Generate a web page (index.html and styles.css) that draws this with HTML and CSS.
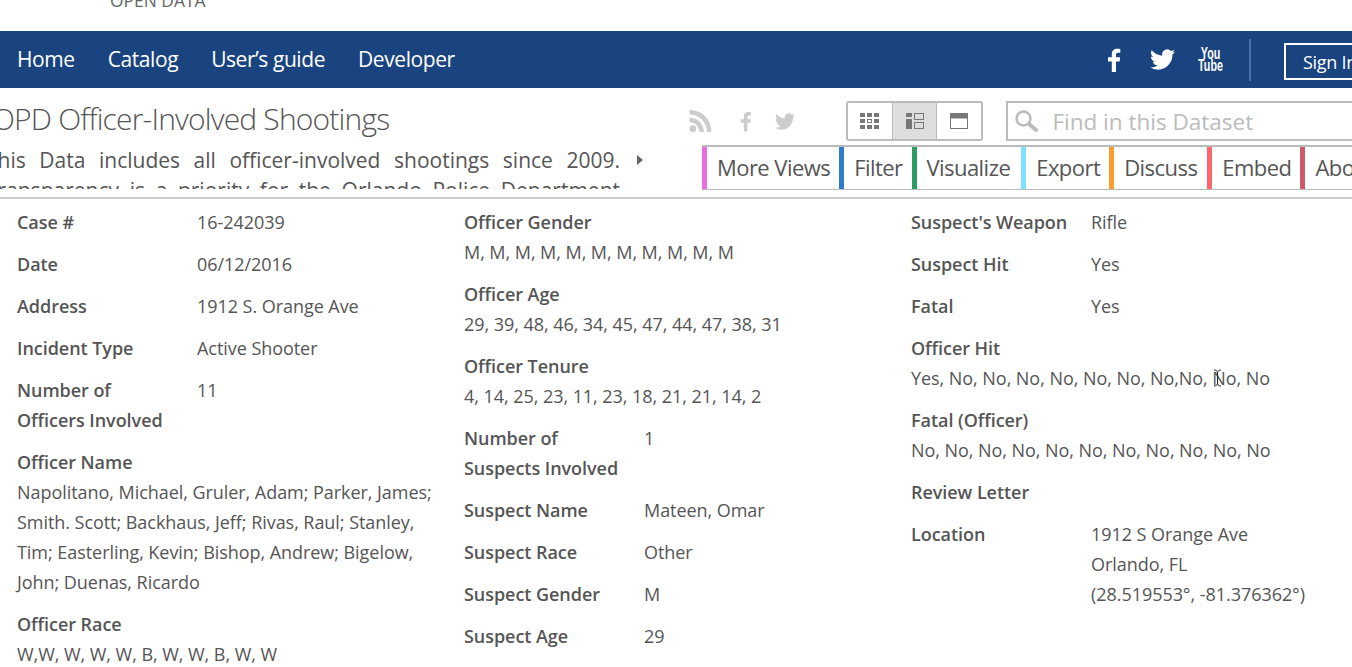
FILE: index.html
```html
<!doctype html>
<html>
<head>
<meta charset="utf-8">
<title>OPD Officer-Involved Shootings</title>
<link rel="stylesheet" href="styles.css">
</head>

<body>
<div class="logo"><span>OPEN DATA</span></div>

<div class="nav">
    <a>Home</a>
    <a>Catalog</a>
    <a>User’s guide</a>
    <a>Developer</a>
    <div class="nav_right">
        <svg class="nav_fb" viewBox="0 0 16 24" width="16" height="24"><path d="M10 24V13.5h3.6l.6-4.2H10V6.700c0-1.200.4-2 2.100-2h2.200V.9C13.900.8 12.600.700 11.200.700 8 .7 5.800 2.600 5.800 6.200v3.100H2v4.200h3.800V24z" fill="#fff"/></svg>
        <svg class="nav_tw" viewBox="0 0 24 24" width="25" height="25"><path d="M23.953 4.570a10 10 0 0 1-2.825.775 4.958 4.958 0 0 0 2.163-2.723c-.951.555-2.005.959-3.127 1.184a4.920 4.920 0 0 0-8.384 4.482C7.690 8.095 4.067 6.130 1.640 3.162a4.822 4.822 0 0 0-.666 2.475c0 1.710.870 3.213 2.188 4.096a4.904 4.904 0 0 1-2.228-.616v.060a4.923 4.923 0 0 0 3.946 4.827 4.996 4.996 0 0 1-2.212.085 4.936 4.936 0 0 0 4.604 3.417 9.867 9.867 0 0 1-6.102 2.105c-.390 0-.779-.023-1.170-.067a13.995 13.995 0 0 0 7.557 2.209c9.053 0 13.998-7.496 13.998-13.985 0-.210 0-.420-.015-.630A9.935 9.935 0 0 0 24 4.590z" fill="#fff"/></svg>
        <div class="nav_yt"><span>You</span><span>Tube</span></div>
        <div class="nav_sep"></div>
        <div class="signin">Sign In</div>
    </div>
</div>

<div class="head">
    <div class="head_left">
        <h1>OPD Officer-Involved Shootings</h1>
        <div class="desc_row">
            <p class="desc">This Data includes all officer-involved shootings since 2009. Transparency is a priority for the Orlando Police Department and this data is shared with the public.</p>
            <div class="desc_arrow"></div>
        </div>
    </div>
    <div class="head_right">
        <div class="tools">
            <svg class="tool_rss" viewBox="0 0 24 24" width="24" height="24"><circle cx="4" cy="20" r="3.500" fill="#ccc"/><path d="M.5 8.500v4.700c6 0 10.300 4.300 10.300 10.300h4.700C15.500 14.800 9 8.500.5 8.500z" fill="#ccc"/><path d="M.5.500v4.700C10.800 5.200 18.800 13.200 18.800 23.500h4.700C23.500 10.500 13.500.5.500.5z" fill="#ccc"/></svg>
            <svg class="tool_fb" viewBox="0 0 16 24" width="14" height="21"><path d="M10 24V13.500h3.600l.6-4.200H10V6.700c0-1.200.4-2 2.100-2h2.200V.9C13.900.8 12.600.7 11.200.7 8 .7 5.800 2.600 5.800 6.200v3.100H2v4.200h3.800V24z" fill="#ccc"/></svg>
            <svg class="tool_tw" viewBox="0 0 24 24" width="21" height="21"><path d="M23.953 4.570a10 10 0 0 1-2.825.775 4.958 4.958 0 0 0 2.163-2.723c-.951.555-2.005.959-3.127 1.184a4.920 4.920 0 0 0-8.384 4.482C7.690 8.095 4.067 6.130 1.640 3.162a4.822 4.822 0 0 0-.666 2.475c0 1.710.870 3.213 2.188 4.096a4.904 4.904 0 0 1-2.228-.616v.060a4.923 4.923 0 0 0 3.946 4.827 4.996 4.996 0 0 1-2.212.085 4.936 4.936 0 0 0 4.604 3.417 9.867 9.867 0 0 1-6.102 2.105c-.390 0-.779-.023-1.170-.067a13.995 13.995 0 0 0 7.557 2.209c9.053 0 13.998-7.496 13.998-13.985 0-.210 0-.420-.015-.630A9.935 9.935 0 0 0 24 4.590z" fill="#ccc"/></svg>
            <div class="views">
                <div class="view">
                    <svg viewBox="0 0 20 16" width="20" height="16"><g fill="#777"><rect x="0" y="0" width="5" height="4"/><rect x="7" y="0" width="5" height="4"/><rect x="14" y="0" width="5" height="4"/><rect x="0" y="6" width="5" height="4"/><rect x="14" y="6" width="5" height="4"/><rect x="0" y="12" width="5" height="4"/><rect x="7" y="12" width="5" height="4"/><rect x="14" y="12" width="5" height="4"/></g><rect x="7.500" y="6.500" width="4" height="3" fill="none" stroke="#777"/></svg>
                </div>
                <div class="view view_on">
                    <svg viewBox="0 0 18 16" width="18" height="16"><g fill="#777"><rect x="0" y="0" width="6" height="4"/><rect x="0" y="6" width="6" height="10"/></g><g fill="none" stroke="#777"><rect x="8.500" y=".5" width="9" height="6"/><rect x="8.500" y="9.500" width="9" height="6"/></g></svg>
                </div>
                <div class="view">
                    <svg viewBox="0 0 18 16" width="18" height="16"><rect x="0" y="0" width="18" height="5" fill="#777"/><rect x=".5" y="5" width="17" height="10.500" fill="none" stroke="#777"/></svg>
                </div>
            </div>
            <div class="search">
                <svg viewBox="0 0 24 24" width="24" height="24"><circle cx="9.500" cy="9.500" r="7" fill="none" stroke="#bbb" stroke-width="2.500"/><path d="M15 15l7 6" stroke="#bbb" stroke-width="4" stroke-linecap="round"/></svg>
                <span>Find in this Dataset</span>
            </div>
        </div>
        <div class="tabs">
            <div class="tab t_pink">More Views</div>
            <div class="tab t_blue">Filter</div>
            <div class="tab t_green">Visualize</div>
            <div class="tab t_cyan">Export</div>
            <div class="tab t_orange">Discuss</div>
            <div class="tab t_red">Embed</div>
            <div class="tab t_dark">About</div>
        </div>
    </div>
</div>

<div class="fields">
    <div class="col">
        <div class="row"><b>Case #</b><span>16-242039</span></div>
        <div class="row"><b>Date</b><span>06/12/2016</span></div>
        <div class="row"><b>Address</b><span>1912 S. Orange Ave</span></div>
        <div class="row"><b>Incident Type</b><span>Active Shooter</span></div>
        <div class="row"><b>Number of<br>Officers Involved</b><span>11</span></div>
        <div class="stack"><b>Officer Name</b><span>Napolitano, Michael, Gruler, Adam; Parker, James; Smith. Scott; Backhaus, Jeff; Rivas, Raul; Stanley, Tim; Easterling, Kevin; Bishop, Andrew; Bigelow, John; Duenas, Ricardo</span></div>
        <div class="stack"><b>Officer Race</b><span>W,W, W, W, W, B, W, W, B, W, W</span></div>
    </div>
    <div class="col">
        <div class="stack"><b>Officer Gender</b><span>M, M, M, M, M, M, M, M, M, M, M</span></div>
        <div class="stack"><b>Officer Age</b><span>29, 39, 48, 46, 34, 45, 47, 44, 47, 38, 31</span></div>
        <div class="stack"><b>Officer Tenure</b><span>4, 14, 25, 23, 11, 23, 18, 21, 21, 14, 2</span></div>
        <div class="row"><b>Number of<br>Suspects Involved</b><span>1</span></div>
        <div class="row"><b>Suspect Name</b><span>Mateen, Omar</span></div>
        <div class="row"><b>Suspect Race</b><span>Other</span></div>
        <div class="row"><b>Suspect Gender</b><span>M</span></div>
        <div class="row"><b>Suspect Age</b><span>29</span></div>
    </div>
    <div class="col">
        <div class="row"><b>Suspect's Weapon</b><span>Rifle</span></div>
        <div class="row"><b>Suspect Hit</b><span>Yes</span></div>
        <div class="row"><b>Fatal</b><span>Yes</span></div>
        <div class="stack hit"><b>Officer Hit</b><span>Yes, No, No, No, No, No, No, No,No, No, No</span>
            <svg class="cursor" viewBox="0 0 9 18" width="9" height="18"><path d="M1 1c2 0 3 1 3.500 2C5 2 6 1 8 1M4.500 3v12M1 17c2 0 3-1 3.500-2 .5 1 1.500 2 3.500 2" fill="none" stroke="#222" stroke-width="1"/></svg>
        </div>
        <div class="stack"><b>Fatal (Officer)</b><span>No, No, No, No, No, No, No, No, No, No, No</span></div>
        <div class="row"><b>Review Letter</b><span></span></div>
        <div class="row"><b>Location</b><span>1912 S Orange Ave<br>Orlando, FL<br>(28.519553°, -81.376362°)</span></div>
    </div>
</div>
</body>
</html>
```

FILE: styles.css
```css
html, body {
    margin: 0;
    height: 667px;
    overflow: hidden;
}
body {
    background: #fff;
    color: #555;
    font-family: "Open Sans", "Liberation Sans", sans-serif;
}
.logo {
    height: 31px;
    overflow: hidden;
    padding-left: 110px;
    box-sizing: border-box;
}
.logo span {
    display: block;
    margin-top: -9px;
    font-size: 17.4px;
    line-height: 18px;
    color: #666;
}

/* nav */
.nav {
    display: flex;
    align-items: center;
    height: 57px;
    box-sizing: border-box;
    background: #1a4480;
    padding: 0 0 2px 17px;
    color: #fff;
    font-size: 21px;
    letter-spacing: -0.42px;
}
.nav a {
    margin-right: 33px;
}
.nav_right {
    display: flex;
    align-items: center;
    position: absolute;
    left: 1106px;
    top: 31px;
    height: 57px;
    width: 300px;
}
.nav_fb {
    margin-right: 28px;
}
.nav_tw {
    margin-right: 24px;
}
.nav_yt {
    display: flex;
    flex-direction: column;
    align-items: center;
    width: 24px;
    font-family: "Liberation Sans", sans-serif;
    font-weight: bold;
    font-size: 16px;
    line-height: 12px;
    letter-spacing: 0;
}
.nav_yt span {
    transform: scaleX(0.67);
}
.nav_sep {
    width: 2px;
    height: 42px;
    background: #4a6fa5;
    margin: 0 33px 0 26px;
}
.signin {
    width: 100px;
    height: 37px;
    box-sizing: border-box;
    margin-top: 3px;
    border: 2px solid #fff;
    padding-left: 17px;
    font-size: 18px;
    line-height: 35px;
    letter-spacing: -0.3px;
    white-space: nowrap;
}

/* title area */
.head {
    display: flex;
    height: 111px;
    box-sizing: border-box;
    border-bottom: 2px solid #ccc;
}
.head_left {
    width: 689px;
    flex: none;
    overflow: hidden;
}
h1 {
    margin: 11px 0 0 -8px;
    font-size: 30px;
    line-height: 40px;
    font-weight: 300;
    letter-spacing: -0.82px;
    color: #555;
    white-space: nowrap;
}
.desc_row {
    display: flex;
    margin-left: -14px;
    margin-top: 6px;
}
.desc {
    width: 634px;
    height: 44px;
    overflow: hidden;
    margin: 0;
    font-size: 21px;
    line-height: 30px;
    text-align: justify;
}
.desc_arrow {
    width: 0;
    height: 0;
    margin: 10px 0 0 17px;
    border-left: 6px solid #666;
    border-top: 5px solid transparent;
    border-bottom: 5px solid transparent;
}
.head_right {
    flex: none;
    width: 700px;
}
.tools {
    display: flex;
    align-items: center;
    height: 53px;
    padding-top: 13px;
    box-sizing: border-box;
}
.tool_rss {
    margin-right: 27px;
}
.tool_fb {
    margin-right: 23px;
}
.tool_tw {
    margin-right: 51px;
}
.views {
    display: flex;
    height: 40px;
    box-sizing: border-box;
    border: 2px solid #bbb;
    border-radius: 3px;
}
.view {
    width: 44px;
    box-sizing: border-box;
    display: flex;
    align-items: center;
    justify-content: center;
}
.view_on {
    width: 45px;
    background: #ddd;
    border-left: 1px solid #bbb;
    border-right: 1px solid #bbb;
}
.search {
    display: flex;
    align-items: center;
    width: 400px;
    height: 40px;
    box-sizing: border-box;
    margin-left: 23px;
    border: 2px solid #bbb;
    padding-left: 6px;
    color: #bbb;
    font-size: 22.5px;
    white-space: nowrap;
}
.search svg {
    margin-right: 14px;
}
.tabs {
    display: flex;
    height: 45px;
    box-sizing: border-box;
    margin-left: 13px;
    margin-top: 4px;
    width: 700px;
    border-top: 2px solid #bbb;
    border-bottom: 1px solid #bbb;
}
.tab {
    border-left: 5px solid;
    padding: 0 9px 0 10px;
    color: #555;
    font-size: 22px;
    line-height: 40px;
    letter-spacing: -0.55px;
    white-space: nowrap;
}
.t_pink { border-color: #e86ee0; }
.t_blue { border-color: #2f7fc8; }
.t_green { border-color: #2a9d63; padding-right: 11px; }
.t_cyan { border-color: #7fe0ff; }
.t_orange { border-color: #ff9a2e; padding-right: 10px; }
.t_red { border-color: #ff646a; }
.t_dark { border-color: #cc5a6a; }

/* fields */
.fields {
    display: grid;
    grid-template-columns: repeat(3, 417px);
    column-gap: 30px;
    padding: 8px 0 0 17px;
    font-size: 18px;
    line-height: 30px;
    letter-spacing: -0.05px;
}
.fields b {
    font-weight: 600;
}
.row {
    display: flex;
    margin-bottom: 12px;
    min-height: 30px;
}
.row b {
    width: 180px;
    flex: none;
}
.stack {
    margin-bottom: 12px;
    position: relative;
}
.stack b, .stack span {
    display: block;
}
.cursor {
    position: absolute;
    left: 302px;
    top: 36px;
}
```
